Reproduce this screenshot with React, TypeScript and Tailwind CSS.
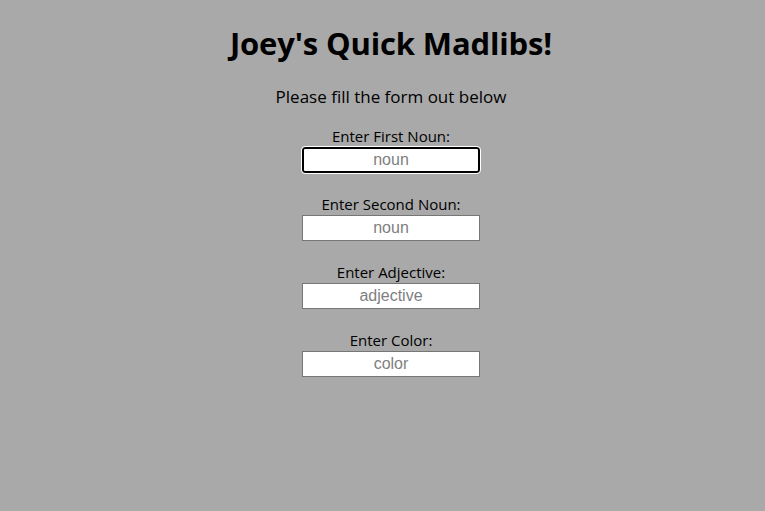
import React from "react"

const fields = [
  { label: "Enter First Noun:", placeholder: "noun", focused: true },
  { label: "Enter Second Noun:", placeholder: "noun" },
  { label: "Enter Adjective:", placeholder: "adjective" },
  { label: "Enter Color:", placeholder: "color" },
]

export default function App() {
  return (
    <div className="min-h-[511px] w-full bg-[#a9a9a9] text-black font-['Open_Sans','Noto_Sans',sans-serif] flex flex-col items-center pt-[22px] pl-[17px]">
      <h1 className="text-[31px] leading-[42px] font-bold tracking-[-0.15px]">Joey's Quick Madlibs!</h1>
      <p className="mt-[21px] text-[17px] leading-[24px]">Please fill the form out below</p>
      <form className="mt-[17px] flex flex-col items-center gap-[21px]">
        {fields.map((f, i) => (
          <div key={i} className="flex flex-col items-center">
            <label className="text-[15px] leading-[21px]">{f.label}</label>
            <input
              type="text"
              placeholder={f.placeholder}
              className={
                f.focused
                  ? "w-[178px] h-[26px] bg-white text-center text-[16px] font-['Liberation_Sans',Arial,sans-serif] placeholder:text-[#808080] border-2 border-black rounded-[3px] outline outline-1 outline-white"
                  : "w-[178px] h-[26px] bg-white text-center text-[16px] font-['Liberation_Sans',Arial,sans-serif] placeholder:text-[#808080] border border-[#767676]"
              }
            />
          </div>
        ))}
      </form>
    </div>
  )
}
